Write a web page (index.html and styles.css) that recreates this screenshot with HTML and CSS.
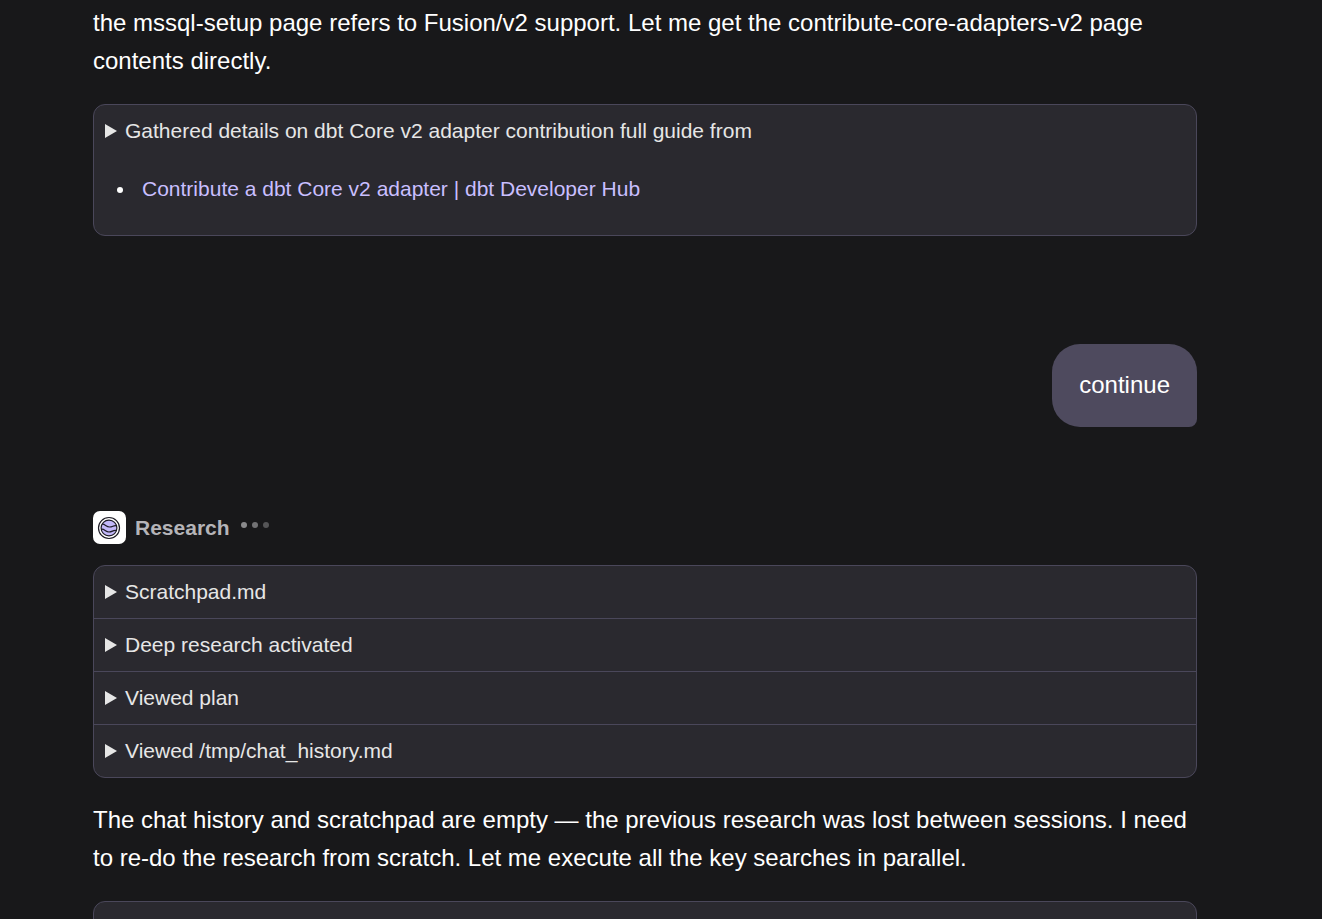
FILE: index.html
```html
<!DOCTYPE html>
<html lang="en">
<head>
    <meta charset="UTF-8">
    <title>Research</title>
    <meta name="viewport" content="width=device-width, initial-scale=1">
    <link rel="stylesheet" href="styles.css">
</head>
<body>

<main class="chat">
    <div class="message">
        <p>the mssql-setup page refers to Fusion/v2 support. Let me get the contribute-core-adapters-v2 page contents directly.</p>

        <div class="steps">
            <details open>
                <summary>Gathered details on dbt Core v2 adapter contribution full guide from</summary>
                <ul>
                    <li><a href="#">Contribute a dbt Core v2 adapter | dbt Developer Hub</a></li>
                </ul>
            </details>
        </div>
    </div>

    <div class="bubble">continue</div>

    <div class="message">
        <div class="author">
            <svg class="avatar" viewBox="0 0 33 33" aria-hidden="true">
                <rect width="33" height="33" rx="7" fill="#fff"/>
                <circle cx="16" cy="17" r="10.5" fill="#fff" stroke="#1d1b26" stroke-width="1.2"/>
                <circle cx="16" cy="17" r="7.900" fill="#c3b8fa" stroke="#1d1b26" stroke-width="1.2"/>
                <path d="M9 13.200C12 12.600 13 16 16.500 16S20.500 14 23.500 14.800M8.300 18.200C11.500 17.600 12.500 21 16 21S20 18.800 23.500 19.600" fill="none" stroke="#1d1b26" stroke-width="1.200"/>
            </svg>
            <span class="name">Research</span>
            <span class="dots"><i></i><i></i><i></i></span>
        </div>

        <div class="steps">
            <details><summary>Scratchpad.md</summary></details>
            <details><summary>Deep research activated</summary></details>
            <details><summary>Viewed plan</summary></details>
            <details><summary>Viewed /tmp/chat_history.md</summary></details>
        </div>

        <p>The chat history and scratchpad are empty — the previous research was lost between sessions. I need to re-do the research from scratch. Let me execute all the key searches in parallel.</p>

        <div class="steps pending"></div>
    </div>
</main>

</body>
</html>
```

FILE: styles.css
```css
body{
    margin: 0;
    height: 100vh;
    overflow: hidden;
    background-color: #18181a;
    color: #fff;
    font-family: "Liberation Sans", Arial, Helvetica, sans-serif;
    font-size: 24px;
    line-height: 38px;
}

.chat{
    display: flex;
    flex-direction: column;
    padding: 4px 125px 0 93px;
}

p{
    margin: 0 0 24px;
}

.steps{
    border: 1px solid #4a475a;
    border-radius: 12px;
    background-color: #2a292f;
    font-size: 21px;
    line-height: 32px;
}

.steps + p{
    margin-top: 23px;
}

.pending{
    min-height: 52px;
}

details{
    padding: 10px 11px;
}

details + details{
    border-top: 1px solid #4a475a;
}

summary{
    display: flex;
    align-items: center;
    gap: 8px;
    color: #e6e6e6;
    cursor: pointer;
}

summary::before{
    content: "";
    width: 12px;
    height: 14px;
    background-color: #e6e6e6;
    clip-path: polygon(0 0, 100% 50%, 0 100%);
}

ul{
    margin: 26px 0 20px;
    padding-left: 31px;
}

li{
    padding-left: 6px;
}

a{
    color: #c9bfff;
    text-decoration: none;
}

.bubble{
    align-self: flex-end;
    margin: 108px 0 84px;
    padding: 22px 27px 23px;
    border-radius: 28px 28px 8px 28px;
    background-color: #4e4a5e;
}

.author{
    display: flex;
    align-items: center;
    gap: 9px;
    margin-bottom: 21px;
    line-height: 33px;
}

.avatar{
    width: 33px;
    height: 33px;
}

.name{
    color: #b5b4b8;
    font-size: 21px;
    font-weight: bold;
}

.dots{
    display: flex;
    gap: 5px;
    padding: 0 0 6px 2px;
}

.dots i{
    width: 6px;
    height: 6px;
    border-radius: 50%;
    background-color: #8a8a8c;
}

.dots i:nth-child(2){
    background-color: #727274;
}

.dots i:nth-child(3){
    background-color: #555557;
}
```
